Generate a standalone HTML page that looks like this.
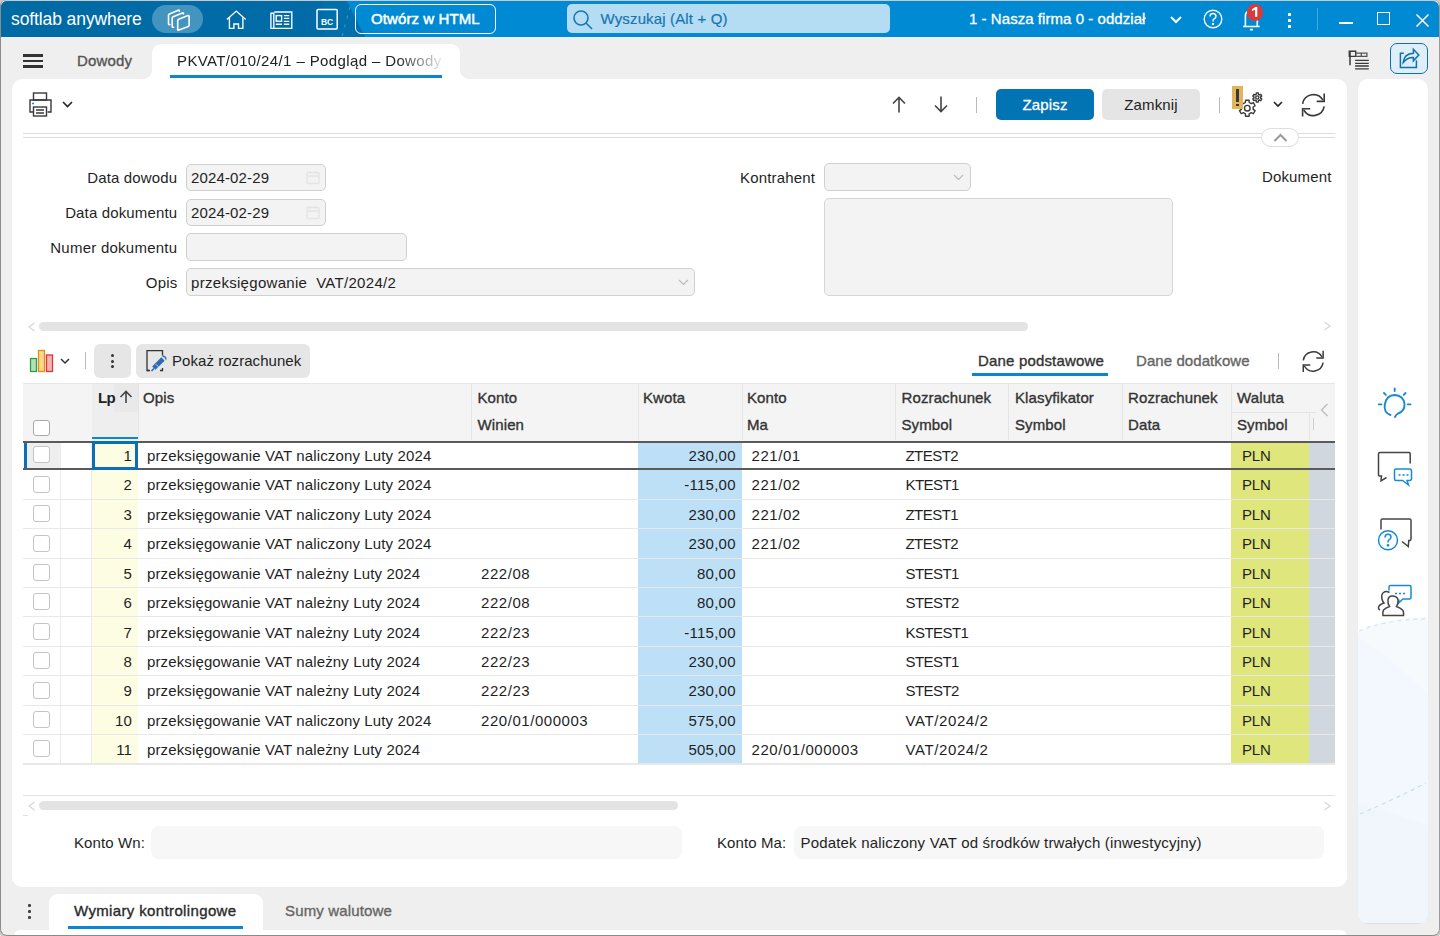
<!DOCTYPE html>
<html><head><meta charset="utf-8">
<style>
*{box-sizing:border-box;margin:0;padding:0}
html,body{width:1440px;height:936px;overflow:hidden;background:#efefef;font-family:"Liberation Sans",sans-serif;color:#1f1f1f}
.a{position:absolute}
.t{position:absolute;white-space:nowrap;font-size:15px;line-height:18px;letter-spacing:0.15px}
svg{position:absolute;overflow:visible}
.h{color:#333;-webkit-text-stroke:0.35px #333;letter-spacing:0.12px}
.m{-webkit-text-stroke:0.35px currentColor}
.d{letter-spacing:0.13px}
#top{position:absolute;left:1px;top:1px;width:1438px;height:36px;border-radius:6px 6px 0 0;overflow:hidden;
 background:#008ad3}
</style></head><body>
<!-- TOPBAR -->
<div id="top">
 <div class="a" style="left:0;top:0;width:380px;height:36px;background:linear-gradient(90deg,#006aa5 0,#006ba6 320px,#0070ad 325px);clip-path:polygon(0 0,346px 0,364px 36px,0 36px)"></div>
 <svg style="left:0;top:0" width="380" height="36"><path d="M349 6 L341 36" stroke="#3a8fc5" stroke-width="1.2" stroke-dasharray="3 6" fill="none"/></svg>
 <div class="t" style="left:10px;top:8px;font-size:17.5px;line-height:20px;color:#fff;letter-spacing:-0.1px">softlab anywhere</div>
 <div class="a" style="left:151px;top:4px;width:51px;height:28px;border-radius:14px;background:#4494c0"></div>
 <svg style="left:150px;top:2px" width="50" height="32" viewBox="0 0 50 32" fill="none" stroke="#fff" stroke-width="1.6" stroke-linecap="round" stroke-linejoin="round">
  <path d="M18.8 21.6 Q17.5 21.8 17.5 20.5 V12.3 Q17.5 11.3 18.5 10.9 L27.2 7.2 Q28.3 6.8 28.3 7.9 V8.3"/>
  <path d="M22.6 24.2 Q21.2 24.5 21.2 23.2 V15.2 Q21.2 14.2 22.2 13.8 L31.4 9.9 Q32.5 9.5 32.5 10.6 V11"/>
  <path d="M26.7 17.7 Q26.7 16.7 27.7 16.3 L37 12.6 Q38.1 12.2 38.1 13.3 V22.3 Q38.1 23.1 37.3 23.4 L27.9 27.1 Q26.7 27.6 26.7 26.4 Z"/>
 </svg>
 <svg style="left:-1px;top:-0.6px" width="300" height="36" viewBox="0 0 300 36" fill="none" stroke="#fff" stroke-width="1.35">
  <path d="M226.9 19.4 L236.3 11.1 L245.7 19.4"/><path d="M229.4 17.3 V28.4 H233.9 V24 H238.5 V28.4 H242.9 V17.3"/>
  <path d="M274.3 12 H291.8 V28.3 H270.9 V13.2 H273.8 V28.3"/><rect x="276.2" y="15.6" width="5.4" height="5.6"/>
  <path d="M283.9 15.7 H289.3 M283.9 18.4 H289.3 M283.9 21.3 H289.3" stroke-width="1.2"/><path d="M275.8 24.3 H282 M283.9 24.3 H289.3" stroke-width="1.4"/>
 </svg>
 <svg style="left:315px;top:7px" width="24" height="24" viewBox="0 0 24 24" fill="none" stroke="#fff" stroke-width="1.5">
  <rect x="1" y="1.5" width="20.2" height="19.6" rx="1"/>
  <text x="11.1" y="16.6" fill="#fff" stroke="none" font-family="Liberation Sans" font-weight="bold" font-size="8.5" text-anchor="middle">BC</text>
 </svg>
 <div class="a" style="left:354px;top:3px;width:141px;height:30px;border:1.5px solid #fff;border-radius:6px"></div>
 <div class="t m" style="left:370px;top:9px;color:#fff;letter-spacing:0.1px;-webkit-text-stroke:0.5px #fff">Otwórz w HTML</div>
 <div class="a" style="left:565.6px;top:2.8px;width:323px;height:28.8px;border-radius:5px;background:#b4ddf3"></div>
 <svg style="left:572px;top:9px" width="20" height="20" viewBox="0 0 20 20" fill="none" stroke="#1878b4" stroke-width="1.6">
  <circle cx="8" cy="8" r="7"/><path d="M13 13 L19 19"/>
 </svg>
 <div class="t m" style="left:599.5px;top:8.6px;color:#1875b2;-webkit-text-stroke:0.2px #1875b2">Wyszukaj (Alt + Q)</div>
 <div class="t m" style="left:968px;top:9px;color:#fff;letter-spacing:0.05px;-webkit-text-stroke:0.3px #fff">1 - Nasza firma 0 - oddział</div>
 <svg style="left:1169px;top:15px" width="12" height="8" viewBox="0 0 12 8" fill="none" stroke="#fff" stroke-width="2">
  <path d="M1 1 L6 6 L11 1"/>
 </svg>
 <svg style="left:1201.2px;top:8.2px" width="22" height="22" viewBox="0 0 22 22" fill="none" stroke="#fff" stroke-width="1.4">
  <circle cx="11" cy="10" r="8.8"/><path d="M8 7.5 Q8 4.5 11 4.5 Q14 4.5 14 7.3 Q14 9 11.8 10.2 Q11 10.7 11 12.5"/><circle cx="11" cy="15" r="0.5" fill="#fff"/>
 </svg>
 <svg style="left:1238.8px;top:5px" width="24" height="26" viewBox="0 0 24 26" fill="none" stroke="#fff" stroke-width="1.6">
  <path d="M5.4 20.5 V10 Q5.4 5.5 9.5 5 M17.3 14 V20.5"/><path d="M3.1 20.5 H19.7"/><path d="M10 23.6 H13"/>
 </svg>
 <div class="a" style="left:1246.2px;top:3.4px;width:16.2px;height:16.2px;border-radius:50%;background:#d83c3a"></div>
 <svg style="left:1246.2px;top:3.4px" width="17" height="17" viewBox="0 0 17 17"><path d="M5 5.2 L8.4 2.9 H10.3 V12.7 H8.1 V5.6 L5 7.2 Z" fill="#fff"/></svg>
 <div class="a" style="left:1287px;top:12px;width:3px;height:3px;background:#fff"></div>
 <div class="a" style="left:1287px;top:18px;width:3px;height:3px;background:#fff"></div>
 <div class="a" style="left:1287px;top:24px;width:3px;height:3px;background:#fff"></div>
 <div class="a" style="left:1316px;top:7px;width:1px;height:22px;background:#4aa8e0"></div>
 <div class="a" style="left:1338px;top:21px;width:14px;height:1.5px;background:#fff"></div>
 <div class="a" style="left:1376px;top:11px;width:13px;height:13px;border:1.5px solid #fff"></div>
 <svg style="left:1415px;top:13px" width="13" height="13" viewBox="0 0 13 13" fill="none" stroke="#fff" stroke-width="1.5">
  <path d="M0.5 0.5 L12.5 12.5 M12.5 0.5 L0.5 12.5"/>
 </svg>
</div>

<!-- TAB ROW -->
<div class="a" style="left:23px;top:54.2px;width:20px;height:2.4px;background:#333"></div>
<div class="a" style="left:23px;top:59.8px;width:20px;height:2.4px;background:#333"></div>
<div class="a" style="left:23px;top:65.4px;width:20px;height:2.5px;background:#333"></div>
<div class="t m" style="left:77px;top:52px;color:#555">Dowody</div>
<div class="a" style="left:152px;top:44px;width:308px;height:40px;background:#fff;border-radius:9px 9px 0 0"></div>
<div class="a" style="left:142px;top:69px;width:10px;height:10px;background:radial-gradient(circle at 0 0,#efefef 10px,#fff 10.5px)"></div>
<div class="a" style="left:460px;top:69px;width:10px;height:10px;background:radial-gradient(circle at 100% 0,#efefef 10px,#fff 10.5px)"></div>
<div class="t" style="left:177px;top:52px;letter-spacing:0.38px;color:#222;-webkit-mask-image:linear-gradient(90deg,#000 0,#000 220px,rgba(0,0,0,.1) 265px);mask-image:linear-gradient(90deg,#000 0,#000 220px,rgba(0,0,0,.1) 265px)">PKVAT/010/24/1 – Podgląd – Dowody</div>
<div class="a" style="left:170px;top:75px;width:272px;height:3px;background:#0a87d0"></div>
<!-- tree icon -->
<svg style="left:1348px;top:50px" width="22" height="22" viewBox="0 0 22 22" fill="none" stroke="#3a3a3a" stroke-width="1.3">
 <path d="M1.3 1.3 H7.7 V6.4 H1.3 Z" stroke-width="1.4"/><path d="M7.7 3.2 H18.9 V6.4 H7.7 M13.3 3.2 V6.4" stroke="#555"/>
 <path d="M2 1.3 V15.2" stroke-width="1.5"/>
 <path d="M7.1 10.4 H20.8 M7.1 13.3 H20.8 M7.1 16 H20.8 M7.1 18.9 H20.8"/>
</svg>
<!-- share button -->
<div class="a" style="left:1390px;top:43px;width:38px;height:31px;border:1.6px solid #0b72b2;border-radius:7px;background:#e0eef8"></div>
<svg style="left:1399px;top:48px" width="22" height="22" viewBox="0 0 22 22" fill="none" stroke="#0b72b2" stroke-width="1.5">
 <path d="M4.8 5.2 H1.4 V19.5 H17.4 V12.2"/><path d="M4.2 14.6 Q4.8 5.8 14.4 5.2 V1.3 L19.8 6.9 L14.4 12.8 V9.6 Q8.2 9.4 4.2 14.6 Z" fill="#e0eef8" stroke-linejoin="miter"/>
</svg>
<!-- MAIN PANEL -->
<div class="a" style="left:12px;top:79px;width:1335px;height:807.7px;background:#fff;border-radius:10px"></div>
<!-- right side panel -->
<div class="a" style="left:1358px;top:79px;width:70px;height:843.5px;border-radius:10px;background:#fff;overflow:hidden;box-shadow:0 1px 1px rgba(0,0,0,.08)"></div>

<!-- TOOLBAR -->
<svg style="left:29px;top:92px" width="23" height="25" viewBox="0 0 23 25" fill="none" stroke="#3a3a3a" stroke-width="1.4">
 <rect x="4.5" y="1" width="13" height="7"/><path d="M4.5 20 H1 V8 H22 V20 H18.5"/><rect x="4.5" y="15" width="13" height="9" fill="#fff"/><path d="M7 18 H15 M7 21 H15"/><path d="M3 11.5 H5" stroke="#1a8ad8"/>
</svg>
<svg style="left:62px;top:101px" width="11" height="7" viewBox="0 0 11 7" fill="none" stroke="#222" stroke-width="1.6"><path d="M1 1 L5.5 5.5 L10 1"/></svg>
<svg style="left:892px;top:96px" width="14" height="17" viewBox="0 0 14 17" fill="none" stroke="#444" stroke-width="1.6"><path d="M7 16.5 V1.5 M1 7.5 L7 1.5 L13 7.5"/></svg>
<svg style="left:934px;top:96px" width="14" height="17" viewBox="0 0 14 17" fill="none" stroke="#444" stroke-width="1.6"><path d="M7 0.5 V15.5 M1 9.5 L7 15.5 L13 9.5"/></svg>
<div class="a" style="left:976px;top:97px;width:1px;height:16px;background:#bbb"></div>
<div class="a" style="left:996px;top:89px;width:98px;height:31px;border-radius:5px;background:#0273b3"></div>
<div class="t m" style="left:996px;top:96px;width:98px;text-align:center;color:#fff;-webkit-text-stroke:0.3px #fff">Zapisz</div>
<div class="a" style="left:1102px;top:89px;width:98px;height:31px;border-radius:5px;background:#e5e5e5"></div>
<div class="t" style="left:1102px;top:96px;width:98px;text-align:center;color:#222;letter-spacing:0.15px">Zamknij</div>
<div class="a" style="left:1219px;top:97px;width:1px;height:16px;background:#bbb"></div>
<svg style="left:1238px;top:91px" width="26" height="27" viewBox="0 0 26 27" fill="none" stroke="#3a3a3a" stroke-width="1.4" stroke-linejoin="round">
 <path d="M7.39 11.51 L7.51 9.20 L11.09 9.20 L11.21 11.51 L13.27 12.70 L15.34 11.65 L17.12 14.75 L15.18 16.01 L15.18 18.39 L17.12 19.65 L15.34 22.75 L13.27 21.70 L11.21 22.89 L11.09 25.20 L7.51 25.20 L7.39 22.89 L5.33 21.70 L3.26 22.75 L1.48 19.65 L3.42 18.39 L3.42 16.01 L1.48 14.75 L3.26 11.65 L5.33 12.70 Z"/><circle cx="9.3" cy="17.2" r="2.8"/>
 <path d="M18.22 3.28 L18.27 1.91 L20.33 1.91 L20.38 3.28 L21.55 3.95 L22.76 3.32 L23.78 5.09 L22.63 5.83 L22.63 7.17 L23.78 7.91 L22.76 9.68 L21.55 9.05 L20.38 9.72 L20.33 11.09 L18.27 11.09 L18.22 9.72 L17.05 9.05 L15.84 9.68 L14.82 7.91 L15.97 7.17 L15.97 5.83 L14.82 5.09 L15.84 3.32 L17.05 3.95 Z"/><circle cx="19.3" cy="6.5" r="1.6"/>
</svg>
<div class="a" style="left:1232px;top:86px;width:11px;height:22.5px;background:#e2b55a"></div>
<div class="a" style="left:1236.2px;top:89.2px;width:2.8px;height:13.3px;background:#3a3a3a"></div>
<div class="a" style="left:1236.2px;top:104px;width:2.8px;height:2px;background:#3a3a3a"></div>
<svg style="left:1273px;top:101px" width="10" height="7" viewBox="0 0 10 7" fill="none" stroke="#222" stroke-width="1.6"><path d="M1 1 L5 5 L9 1"/></svg>
<svg style="left:1300px;top:91px" width="27" height="27" viewBox="0 0 27 27" fill="none" stroke="#3a3a3a" stroke-width="1.6">
 <g transform="translate(0.2 0.6)"><path d="M2.4 12.2 A11 11 0 0 1 22.8 8.6"/><path d="M24 1.8 V9.8 H16.5"/><path d="M24 14.8 A11 11 0 0 1 3.6 18.4"/><path d="M2.4 25 V17.2 H10"/></g>
</svg>
<div class="a" style="left:23px;top:133px;width:1312px;height:1px;background:#dedede"></div>
<div class="a" style="left:23px;top:137px;width:1312px;height:1px;background:#dedede"></div>
<div class="a" style="left:1261.3px;top:128px;width:37.5px;height:19px;border-radius:10px;border:1px solid #ddd;background:#fff"></div>
<svg style="left:1273px;top:133px" width="15" height="9" viewBox="0 0 15 9" fill="none" stroke="#999" stroke-width="2"><path d="M1.5 8 L7.5 2 L13.5 8"/></svg>
<!-- FORM -->
<div class="t" style="left:40px;top:169px;width:137.3px;text-align:right">Data dowodu</div>
<div class="t" style="left:40px;top:204px;width:137.3px;text-align:right">Data dokumentu</div>
<div class="t" style="left:40px;top:239px;width:137.3px;text-align:right;letter-spacing:0.24px">Numer dokumentu</div>
<div class="t" style="left:40px;top:274px;width:137.3px;text-align:right">Opis</div>
<div class="a" style="left:186px;top:164px;width:140px;height:27px;border:1px solid #d0d0d0;border-radius:5px;background:#f3f3f3"></div>
<div class="a" style="left:186px;top:199px;width:140px;height:27px;border:1px solid #d0d0d0;border-radius:5px;background:#f3f3f3"></div>
<div class="a" style="left:186px;top:233px;width:221px;height:28px;border:1px solid #d0d0d0;border-radius:5px;background:#f3f3f3"></div>
<div class="a" style="left:186px;top:268px;width:509px;height:28px;border:1px solid #d0d0d0;border-radius:5px;background:#f3f3f3"></div>
<div class="t" style="left:191px;top:169px">2024-02-29</div>
<div class="t" style="left:191px;top:204px">2024-02-29</div>
<div class="t" style="left:191px;top:274px;letter-spacing:0.3px">przeksięgowanie&nbsp; VAT/2024/2</div>
<svg style="left:306px;top:170px" width="14" height="15" viewBox="0 0 14 15" fill="none" stroke="#e4e4e4" stroke-width="1.3"><rect x="1" y="2.5" width="12" height="11" rx="1"/><path d="M1 6 H13 M4 1 V3.5 M10 1 V3.5"/></svg>
<svg style="left:306px;top:205px" width="14" height="15" viewBox="0 0 14 15" fill="none" stroke="#e4e4e4" stroke-width="1.3"><rect x="1" y="2.5" width="12" height="11" rx="1"/><path d="M1 6 H13 M4 1 V3.5 M10 1 V3.5"/></svg>
<svg style="left:678px;top:279px" width="11" height="7" viewBox="0 0 11 7" fill="none" stroke="#bbb" stroke-width="1.2"><path d="M1 1 L5.5 5.5 L10 1"/></svg>
<div class="t" style="left:700px;top:169px;width:115px;text-align:right">Kontrahent</div>
<div class="a" style="left:824px;top:163px;width:147px;height:28px;border:1px solid #d0d0d0;border-radius:5px;background:#f3f3f3"></div>
<svg style="left:953px;top:174px" width="11" height="7" viewBox="0 0 11 7" fill="none" stroke="#bbb" stroke-width="1.2"><path d="M1 1 L5.5 5.5 L10 1"/></svg>
<div class="a" style="left:824px;top:198px;width:349px;height:98px;border:1px solid #d6d6d6;border-radius:5px;background:#f3f3f3"></div>
<div class="t" style="left:1262px;top:168px">Dokument</div>
<!-- form scrollbar -->
<svg style="left:28px;top:321.5px" width="8" height="10" viewBox="0 0 8 10" fill="none" stroke="#d6d6d6" stroke-width="1.2"><path d="M6.5 1 L1 5 L6.5 9"/></svg>
<div class="a" style="left:39px;top:322px;width:989px;height:9px;border-radius:5px;background:#e3e3e3"></div>
<svg style="left:1323px;top:321px" width="8" height="10" viewBox="0 0 8 10" fill="none" stroke="#d6d6d6" stroke-width="1.2"><path d="M1.5 1 L7 5 L1.5 9"/></svg>
<!-- GRID TOOLBAR -->
<svg style="left:29px;top:349px" width="26" height="24" viewBox="0 0 26 24" stroke-width="1.3">
 <rect x="1.5" y="9.5" width="6" height="13" fill="#b5e0b5" stroke="#2aa045"/><rect x="9.5" y="1.5" width="6" height="21" fill="#fbd98a" stroke="#e88a20"/><rect x="17.5" y="6" width="6" height="16.5" fill="#f5b5b5" stroke="#d83838"/>
</svg>
<svg style="left:60px;top:358px" width="10" height="7" viewBox="0 0 10 7" fill="none" stroke="#333" stroke-width="1.5"><path d="M1 1 L5 5 L9 1"/></svg>
<div class="a" style="left:85px;top:352px;width:1px;height:17px;background:#bbb"></div>
<div class="a" style="left:94px;top:344px;width:37px;height:34px;border-radius:6px;background:#e6e6e6"></div>
<div class="a" style="left:110.8px;top:354.1px;width:3px;height:3px;background:#333;border-radius:50%"></div>
<div class="a" style="left:110.8px;top:359.6px;width:3px;height:3px;background:#333;border-radius:50%"></div>
<div class="a" style="left:110.8px;top:365.1px;width:3px;height:3px;background:#333;border-radius:50%"></div>
<div class="a" style="left:136px;top:344px;width:174px;height:34px;border-radius:6px;background:#e6e6e6"></div>
<svg style="left:146px;top:350px" width="22" height="22" viewBox="0 0 22 22" fill="none" stroke-width="1.3">
 <path d="M4 20.5 H1 V0.6 H16.5 V5.5" stroke="#333"/><path d="M1 20.5 H3" stroke="#333"/><path d="M14 20.5 H16.5 V18" stroke="#333"/>
 <path d="M7.8 18.2 L17 9" stroke="#2a6bb8" stroke-width="4.6"/><path d="M5.5 21 L8 18.5" stroke="#2a6bb8" stroke-width="1.6"/>
 <path d="M9.8 14.2 L12.3 16.7" stroke="#e6e6e6" stroke-width="0.9"/>
 <path d="M16.5 6.2 Q19.8 6 19.9 9.5" stroke="#2a6bb8" stroke-width="1.4"/>
</svg>
<div class="t" style="left:172px;top:352px;letter-spacing:0.05px">Pokaż rozrachunek</div>
<div class="t m" style="left:978px;top:352px;color:#333;letter-spacing:0.17px">Dane podstawowe</div>
<div class="a" style="left:972px;top:373px;width:136px;height:3px;background:#0a87d0"></div>
<div class="t m" style="left:1136px;top:352px;color:#666;letter-spacing:0.08px">Dane dodatkowe</div>
<div class="a" style="left:1278px;top:353px;width:1px;height:16px;background:#bbb"></div>
<svg style="left:1300px;top:347.6px" width="27" height="27" viewBox="0 0 27 27" fill="none" stroke="#3a3a3a" stroke-width="1.6">
 <g transform="translate(1.06 1.08) scale(0.92)"><path d="M2.4 12.2 A11 11 0 0 1 22.8 8.6"/><path d="M24 1.8 V9.8 H16.5"/><path d="M24 14.8 A11 11 0 0 1 3.6 18.4"/><path d="M2.4 25 V17.2 H10"/></g>
</svg>
<!-- GRID HEADER -->
<div class="a" style="left:23px;top:383px;width:1312px;height:58px;background:#f4f4f4;border-top:1px solid #e6e6e6"></div>
<div class="a" style="left:92px;top:384px;width:46px;height:56px;background:#eeeeee"></div>
<div class="a" style="left:114px;top:384px;width:24px;height:28px;background:#e9e9e9"></div>
<div class="a" style="left:92px;top:436.5px;width:46px;height:2.5px;background:#0a87d0"></div>
<div class="a" style="left:138px;top:384px;width:1px;height:56px;background:#e4e4e4"></div>
<div class="a" style="left:470.5px;top:384px;width:1px;height:56px;background:#e4e4e4"></div>
<div class="a" style="left:637.5px;top:384px;width:1px;height:56px;background:#e4e4e4"></div>
<div class="a" style="left:741.7px;top:384px;width:1px;height:56px;background:#e4e4e4"></div>
<div class="a" style="left:895.3px;top:384px;width:1px;height:56px;background:#e4e4e4"></div>
<div class="a" style="left:1008.4px;top:384px;width:1px;height:56px;background:#e4e4e4"></div>
<div class="a" style="left:1121.9px;top:384px;width:1px;height:56px;background:#e4e4e4"></div>
<div class="a" style="left:1231.4px;top:384px;width:1px;height:56px;background:#e4e4e4"></div>
<div class="a" style="left:1231.4px;top:412px;width:104px;height:1px;background:#e4e4e4"></div>
<div class="a" style="left:1308.7px;top:412px;width:1px;height:28px;background:#e4e4e4"></div>
<div class="a" style="left:33px;top:420px;width:17px;height:16px;border:1px solid #a8a8a8;border-radius:3px;background:#fff"></div>
<div class="t" style="left:98px;top:389px;font-weight:bold;color:#222;letter-spacing:-0.6px">Lp</div>
<div class="t h" style="left:143px;top:389px">Opis</div>
<div class="t h" style="left:477.5px;top:389px">Konto</div>
<div class="t h" style="left:477.5px;top:416px">Winien</div>
<div class="t h" style="left:643px;top:389px">Kwota</div>
<div class="t h" style="left:747px;top:389px">Konto</div>
<div class="t h" style="left:747px;top:416px">Ma</div>
<div class="t h" style="left:901.5px;top:389px">Rozrachunek</div>
<div class="t h" style="left:901.5px;top:416px">Symbol</div>
<div class="t h" style="left:1015px;top:389px">Klasyfikator</div>
<div class="t h" style="left:1015px;top:416px">Symbol</div>
<div class="t h" style="left:1128px;top:389px">Rozrachunek</div>
<div class="t h" style="left:1128px;top:416px">Data</div>
<div class="t h" style="left:1237px;top:389px">Waluta</div>
<div class="t h" style="left:1237px;top:416px">Symbol</div>
<svg style="left:119px;top:390px" width="14" height="14" viewBox="0 0 14 14" fill="none" stroke="#444" stroke-width="1.6"><path d="M7 13 V1.5 M1.5 7 L7 1.5 L12.5 7"/></svg>
<div class="a" style="left:1316px;top:384px;width:19px;height:56px;background:#f4f4f4"></div>
<svg style="left:1320px;top:403px" width="9" height="14" viewBox="0 0 9 14" fill="none" stroke="#bbb" stroke-width="1.3"><path d="M7.5 1 L1.5 7 L7.5 13"/></svg>
<div class="a" style="left:1313px;top:418px;width:1px;height:12px;background:#ccc"></div>
<!-- GRID BODY -->
<div class="a" style="left:92px;top:441px;width:46px;height:322.4px;background:#fdfde4"></div>
<div class="a" style="left:637.5px;top:441px;width:104.2px;height:322.4px;background:#bde0f7"></div>
<div class="a" style="left:1231.4px;top:441px;width:77.3px;height:322.4px;background:#dfe67b"></div>
<div class="a" style="left:1308.7px;top:441px;width:26.3px;height:322.4px;background:#d0d7de"></div>
<div class="a" style="left:60px;top:441px;width:1px;height:322.4px;background:#ececec"></div>
<div class="a" style="left:91px;top:441px;width:1px;height:322.4px;background:#ececec"></div>
<div class="a" style="left:23px;top:498.6px;width:1312px;height:1.2px;background:#e8e8e8"></div>
<div class="a" style="left:23px;top:528.0px;width:1312px;height:1.2px;background:#e8e8e8"></div>
<div class="a" style="left:23px;top:557.5px;width:1312px;height:1.2px;background:#e8e8e8"></div>
<div class="a" style="left:23px;top:586.9px;width:1312px;height:1.2px;background:#e8e8e8"></div>
<div class="a" style="left:23px;top:616.3px;width:1312px;height:1.2px;background:#e8e8e8"></div>
<div class="a" style="left:23px;top:645.7px;width:1312px;height:1.2px;background:#e8e8e8"></div>
<div class="a" style="left:23px;top:675.1px;width:1312px;height:1.2px;background:#e8e8e8"></div>
<div class="a" style="left:23px;top:704.6px;width:1312px;height:1.2px;background:#e8e8e8"></div>
<div class="a" style="left:23px;top:734.0px;width:1312px;height:1.2px;background:#e8e8e8"></div>
<div class="a" style="left:23px;top:763.4px;width:1312px;height:1.2px;background:#e8e8e8"></div>
<div class="a" style="left:27px;top:443px;width:33px;height:25px;background:#eeeeee"></div>
<div class="a" style="left:23px;top:441px;width:1312px;height:2px;background:#5a5a5a"></div>
<div class="a" style="left:23px;top:467.5px;width:1312px;height:2.5px;background:#5a5a5a"></div>
<div class="a" style="left:23.5px;top:443px;width:3px;height:24.5px;background:#0a6fb5"></div>
<div class="a" style="left:92px;top:441px;width:46px;height:29px;border:3.4px solid #0a6fb5"></div>
<div class="a" style="left:33px;top:446.2px;width:17px;height:17px;border:1px solid #c4c4c4;border-radius:3px;background:#fff"></div>
<div class="t" style="left:92px;top:447.0px;width:39.8px;text-align:right;letter-spacing:0">1</div>
<div class="t d" style="left:147px;top:447.0px">przeksięgowanie VAT naliczony Luty 2024</div>
<div class="t" style="left:637px;top:447.0px;width:98.8px;text-align:right;letter-spacing:0.25px">230,00</div>
<div class="t" style="left:751.5px;top:447.0px;letter-spacing:0.55px">221/01</div>
<div class="t" style="left:905.5px;top:447.0px;letter-spacing:-0.55px">ZTEST2</div>
<div class="t" style="left:1242px;top:447.0px;letter-spacing:-0.2px">PLN</div>
<div class="a" style="left:33px;top:475.6px;width:17px;height:17px;border:1px solid #c4c4c4;border-radius:3px;background:#fff"></div>
<div class="t" style="left:92px;top:476.4px;width:39.8px;text-align:right;letter-spacing:0">2</div>
<div class="t d" style="left:147px;top:476.4px">przeksięgowanie VAT naliczony Luty 2024</div>
<div class="t" style="left:637px;top:476.4px;width:98.8px;text-align:right;letter-spacing:0.25px">-115,00</div>
<div class="t" style="left:751.5px;top:476.4px;letter-spacing:0.55px">221/02</div>
<div class="t" style="left:905.5px;top:476.4px;letter-spacing:-0.55px">KTEST1</div>
<div class="t" style="left:1242px;top:476.4px;letter-spacing:-0.2px">PLN</div>
<div class="a" style="left:33px;top:505.0px;width:17px;height:17px;border:1px solid #c4c4c4;border-radius:3px;background:#fff"></div>
<div class="t" style="left:92px;top:505.8px;width:39.8px;text-align:right;letter-spacing:0">3</div>
<div class="t d" style="left:147px;top:505.8px">przeksięgowanie VAT naliczony Luty 2024</div>
<div class="t" style="left:637px;top:505.8px;width:98.8px;text-align:right;letter-spacing:0.25px">230,00</div>
<div class="t" style="left:751.5px;top:505.8px;letter-spacing:0.55px">221/02</div>
<div class="t" style="left:905.5px;top:505.8px;letter-spacing:-0.55px">ZTEST1</div>
<div class="t" style="left:1242px;top:505.8px;letter-spacing:-0.2px">PLN</div>
<div class="a" style="left:33px;top:534.5px;width:17px;height:17px;border:1px solid #c4c4c4;border-radius:3px;background:#fff"></div>
<div class="t" style="left:92px;top:535.3px;width:39.8px;text-align:right;letter-spacing:0">4</div>
<div class="t d" style="left:147px;top:535.3px">przeksięgowanie VAT naliczony Luty 2024</div>
<div class="t" style="left:637px;top:535.3px;width:98.8px;text-align:right;letter-spacing:0.25px">230,00</div>
<div class="t" style="left:751.5px;top:535.3px;letter-spacing:0.55px">221/02</div>
<div class="t" style="left:905.5px;top:535.3px;letter-spacing:-0.55px">ZTEST2</div>
<div class="t" style="left:1242px;top:535.3px;letter-spacing:-0.2px">PLN</div>
<div class="a" style="left:33px;top:563.9px;width:17px;height:17px;border:1px solid #c4c4c4;border-radius:3px;background:#fff"></div>
<div class="t" style="left:92px;top:564.7px;width:39.8px;text-align:right;letter-spacing:0">5</div>
<div class="t d" style="left:147px;top:564.7px">przeksięgowanie VAT należny Luty 2024</div>
<div class="t" style="left:481px;top:564.7px;letter-spacing:0.55px">222/08</div>
<div class="t" style="left:637px;top:564.7px;width:98.8px;text-align:right;letter-spacing:0.25px">80,00</div>
<div class="t" style="left:905.5px;top:564.7px;letter-spacing:-0.55px">STEST1</div>
<div class="t" style="left:1242px;top:564.7px;letter-spacing:-0.2px">PLN</div>
<div class="a" style="left:33px;top:593.3px;width:17px;height:17px;border:1px solid #c4c4c4;border-radius:3px;background:#fff"></div>
<div class="t" style="left:92px;top:594.1px;width:39.8px;text-align:right;letter-spacing:0">6</div>
<div class="t d" style="left:147px;top:594.1px">przeksięgowanie VAT należny Luty 2024</div>
<div class="t" style="left:481px;top:594.1px;letter-spacing:0.55px">222/08</div>
<div class="t" style="left:637px;top:594.1px;width:98.8px;text-align:right;letter-spacing:0.25px">80,00</div>
<div class="t" style="left:905.5px;top:594.1px;letter-spacing:-0.55px">STEST2</div>
<div class="t" style="left:1242px;top:594.1px;letter-spacing:-0.2px">PLN</div>
<div class="a" style="left:33px;top:622.7px;width:17px;height:17px;border:1px solid #c4c4c4;border-radius:3px;background:#fff"></div>
<div class="t" style="left:92px;top:623.5px;width:39.8px;text-align:right;letter-spacing:0">7</div>
<div class="t d" style="left:147px;top:623.5px">przeksięgowanie VAT należny Luty 2024</div>
<div class="t" style="left:481px;top:623.5px;letter-spacing:0.55px">222/23</div>
<div class="t" style="left:637px;top:623.5px;width:98.8px;text-align:right;letter-spacing:0.25px">-115,00</div>
<div class="t" style="left:905.5px;top:623.5px;letter-spacing:-0.55px">KSTEST1</div>
<div class="t" style="left:1242px;top:623.5px;letter-spacing:-0.2px">PLN</div>
<div class="a" style="left:33px;top:652.1px;width:17px;height:17px;border:1px solid #c4c4c4;border-radius:3px;background:#fff"></div>
<div class="t" style="left:92px;top:652.9px;width:39.8px;text-align:right;letter-spacing:0">8</div>
<div class="t d" style="left:147px;top:652.9px">przeksięgowanie VAT należny Luty 2024</div>
<div class="t" style="left:481px;top:652.9px;letter-spacing:0.55px">222/23</div>
<div class="t" style="left:637px;top:652.9px;width:98.8px;text-align:right;letter-spacing:0.25px">230,00</div>
<div class="t" style="left:905.5px;top:652.9px;letter-spacing:-0.55px">STEST1</div>
<div class="t" style="left:1242px;top:652.9px;letter-spacing:-0.2px">PLN</div>
<div class="a" style="left:33px;top:681.6px;width:17px;height:17px;border:1px solid #c4c4c4;border-radius:3px;background:#fff"></div>
<div class="t" style="left:92px;top:682.4px;width:39.8px;text-align:right;letter-spacing:0">9</div>
<div class="t d" style="left:147px;top:682.4px">przeksięgowanie VAT należny Luty 2024</div>
<div class="t" style="left:481px;top:682.4px;letter-spacing:0.55px">222/23</div>
<div class="t" style="left:637px;top:682.4px;width:98.8px;text-align:right;letter-spacing:0.25px">230,00</div>
<div class="t" style="left:905.5px;top:682.4px;letter-spacing:-0.55px">STEST2</div>
<div class="t" style="left:1242px;top:682.4px;letter-spacing:-0.2px">PLN</div>
<div class="a" style="left:33px;top:711.0px;width:17px;height:17px;border:1px solid #c4c4c4;border-radius:3px;background:#fff"></div>
<div class="t" style="left:92px;top:711.8px;width:39.8px;text-align:right;letter-spacing:0">10</div>
<div class="t d" style="left:147px;top:711.8px">przeksięgowanie VAT naliczony Luty 2024</div>
<div class="t" style="left:481px;top:711.8px;letter-spacing:0.55px">220/01/000003</div>
<div class="t" style="left:637px;top:711.8px;width:98.8px;text-align:right;letter-spacing:0.25px">575,00</div>
<div class="t" style="left:905.5px;top:711.8px;letter-spacing:0.6px">VAT/2024/2</div>
<div class="t" style="left:1242px;top:711.8px;letter-spacing:-0.2px">PLN</div>
<div class="a" style="left:33px;top:740.4px;width:17px;height:17px;border:1px solid #c4c4c4;border-radius:3px;background:#fff"></div>
<div class="t" style="left:92px;top:741.2px;width:39.8px;text-align:right;letter-spacing:0">11</div>
<div class="t d" style="left:147px;top:741.2px">przeksięgowanie VAT należny Luty 2024</div>
<div class="t" style="left:637px;top:741.2px;width:98.8px;text-align:right;letter-spacing:0.25px">505,00</div>
<div class="t" style="left:751.5px;top:741.2px;letter-spacing:0.55px">220/01/000003</div>
<div class="t" style="left:905.5px;top:741.2px;letter-spacing:0.6px">VAT/2024/2</div>
<div class="t" style="left:1242px;top:741.2px;letter-spacing:-0.2px">PLN</div>
<div class="a" style="left:23px;top:795px;width:1312px;height:1px;background:#e2e2e2"></div>
<div class="a" style="left:23px;top:815px;width:5px;height:1px;background:#e0e0e0"></div>
<svg style="left:28px;top:801px" width="8" height="10" viewBox="0 0 8 10" fill="none" stroke="#d6d6d6" stroke-width="1.2"><path d="M6.5 1 L1 5 L6.5 9"/></svg>
<div class="a" style="left:39px;top:801px;width:639px;height:9px;border-radius:5px;background:#e3e3e3"></div>
<svg style="left:1323px;top:801px" width="8" height="10" viewBox="0 0 8 10" fill="none" stroke="#d6d6d6" stroke-width="1.2"><path d="M1.5 1 L7 5 L1.5 9"/></svg>
<!-- BOTTOM FIELDS -->
<div class="t" style="left:74px;top:834px;letter-spacing:0.1px">Konto Wn:</div>
<div class="a" style="left:151px;top:826px;width:531px;height:33px;border-radius:8px;background:#f7f7f7"></div>
<div class="t" style="left:717px;top:834px;letter-spacing:0.1px">Konto Ma:</div>
<div class="a" style="left:794px;top:826px;width:530px;height:33px;border-radius:8px;background:#f7f7f7"></div>
<div class="t" style="left:800.5px;top:834px;letter-spacing:0.18px">Podatek naliczony VAT od środków trwałych (inwestycyjny)</div>
<!-- BOTTOM TABS -->
<div class="a" style="left:27.5px;top:904px;width:3px;height:3px;background:#444;border-radius:1px"></div>
<div class="a" style="left:27.5px;top:910px;width:3px;height:3px;background:#444;border-radius:1px"></div>
<div class="a" style="left:27.5px;top:916px;width:3px;height:3px;background:#444;border-radius:1px"></div>
<div class="a" style="left:49px;top:894px;width:214px;height:42px;border-radius:9px 9px 0 0;background:#fff"></div>
<div class="t m" style="left:74px;top:902px;color:#2a2a2a;letter-spacing:0.36px">Wymiary kontrolingowe</div>
<div class="a" style="left:68px;top:926px;width:175px;height:3px;background:#0a87d0"></div>
<div class="t m" style="left:285px;top:902px;color:#666;letter-spacing:0.15px">Sumy walutowe</div>
<div class="a" style="left:14px;top:930px;width:1333px;height:6px;border-radius:8px 8px 0 0;background:#fff"></div>


<!-- SIDE PANEL ICONS -->
<svg style="left:1376px;top:386px" width="38" height="34" viewBox="0 0 38 34" fill="none" stroke="#1a8ad0" stroke-width="1.9" stroke-linecap="round">
 <path d="M14.5 29 Q7.5 26.5 8.8 18.5 Q10.5 9 18.7 9 Q27.5 9.5 28.5 18 Q29 25 22 27.5 Q20 28.7 19 31"/>
 <path d="M18.7 2.5 V5 M8 7 L9.8 8.8 M29.5 7 L27.7 8.8 M2.8 18.4 H5.5 M31.8 18.4 H34.5"/>
</svg>
<svg style="left:1376px;top:450px" width="38" height="38" viewBox="0 0 38 38" fill="none" stroke-width="1.5">
 <path d="M34.2 13.5 V3.8 Q34.2 2.5 33 2.5 H4 Q2.5 2.5 2.5 4 V25 Q2.5 26 3.5 26 H5.5 L5 30.8 L10.5 27.5" stroke="#444"/>
 <path d="M18.5 20.5 Q18.5 19 20 19 H33.5 Q35.5 19 35.5 21 V28.5 Q35.5 30.5 33.5 30.5 H31 L32.5 35 L26.5 30.5 H20 Q18.5 30.5 18.5 29 Z" stroke="#1a8ad0"/>
 <path d="M22.5 25 H24.5 M26.5 25 H28.5 M30.5 25 H32.5" stroke="#1a8ad0"/>
</svg>
<svg style="left:1376px;top:517px" width="38" height="34" viewBox="0 0 38 34" fill="none" stroke-width="1.5">
 <path d="M5 12.5 V3.5 Q5 2 6.5 2 H33.5 Q35 2 35 3.5 V22 Q35 23.5 33.5 23.5 H32.8 L32.3 29.5 L26 24.5" stroke="#444"/>
 <circle cx="12" cy="23.3" r="9.5" fill="#fafcfe" stroke="#1a8ad0"/>
 <path d="M9 20.5 Q9 17.3 12 17.3 Q15 17.3 15 20 Q15 21.7 13 22.8 Q12 23.5 12 25.5" stroke="#1a8ad0"/><circle cx="12" cy="28.3" r="0.6" fill="#1a8ad0" stroke="#1a8ad0"/>
</svg>
<svg style="left:1376px;top:583px" width="38" height="36" viewBox="0 0 38 36" fill="none" stroke-width="1.5">
 <path d="M13 7.5 V4 Q13 2.5 14.5 2.5 H33.5 Q35 2.5 35 4 V14.5 Q35 16 33.5 16 H27 L22.5 20 L23 16.5" stroke="#1a8ad0"/>
 <path d="M19 10.5 H21 M23 10.5 H25 M27 10.5 H29" stroke="#1a8ad0"/>
 <path d="M13.5 9.5 Q10 7.5 7.5 9.5 Q5 11.5 6 16 Q6.5 18.5 8 20 Q3 21.5 2.5 24.5 Q2 26 4 27" stroke="#444"/>
 <path d="M16 13 Q12.5 13 12 17 Q11.5 21 13.5 23.5 Q9.5 25 7.5 27 Q6.5 28.5 7 32.5 H27.5 Q28 28.5 26.5 27 Q24.5 25 20.5 23.5 Q22.5 21 22 17 Q21.5 13 16 13 Z" stroke="#444" fill="#fafcfe"/>
</svg>
<svg style="left:1358px;top:600px" width="70" height="323" viewBox="0 0 70 323">
 <defs><clipPath id="spc"><path d="M0 0 H70 V313 Q70 323 60 323 H10 Q0 323 0 313 Z"/></clipPath></defs>
 <g clip-path="url(#spc)">
 <path d="M0 32 Q25 18 70 17 V323 H0 Z" fill="#f6fafd"/>
 <path d="M0 36 Q35 60 70 95 V323 H0 Z" fill="#f2f8fd"/>
 <path d="M0 203 Q35 212 70 226 V323 H0 Z" fill="#f0f6fc"/>
 <path d="M1 31 Q30 19 70 19" fill="none" stroke="#cfe4f4" stroke-width="1.2" stroke-dasharray="4 4"/>
 <path d="M2 214 Q35 200 68 183" fill="none" stroke="#c6dff2" stroke-width="1.2" stroke-dasharray="4 4"/>
 </g>
</svg>
<!-- window borders -->
<div class="a" style="left:0;top:0;width:1440px;height:1px;background:#cdc8c3"></div>
<div class="a" style="left:0;top:0;width:1440px;height:936px;border-left:1px solid #8c8c8c;border-right:1px solid #9c9c9c;border-bottom:1px solid #8a8a8a;border-top:0;border-radius:6px 6px 7px 7px;box-shadow:0 0 0 2px #cdc8c3"></div>
</body></html>
